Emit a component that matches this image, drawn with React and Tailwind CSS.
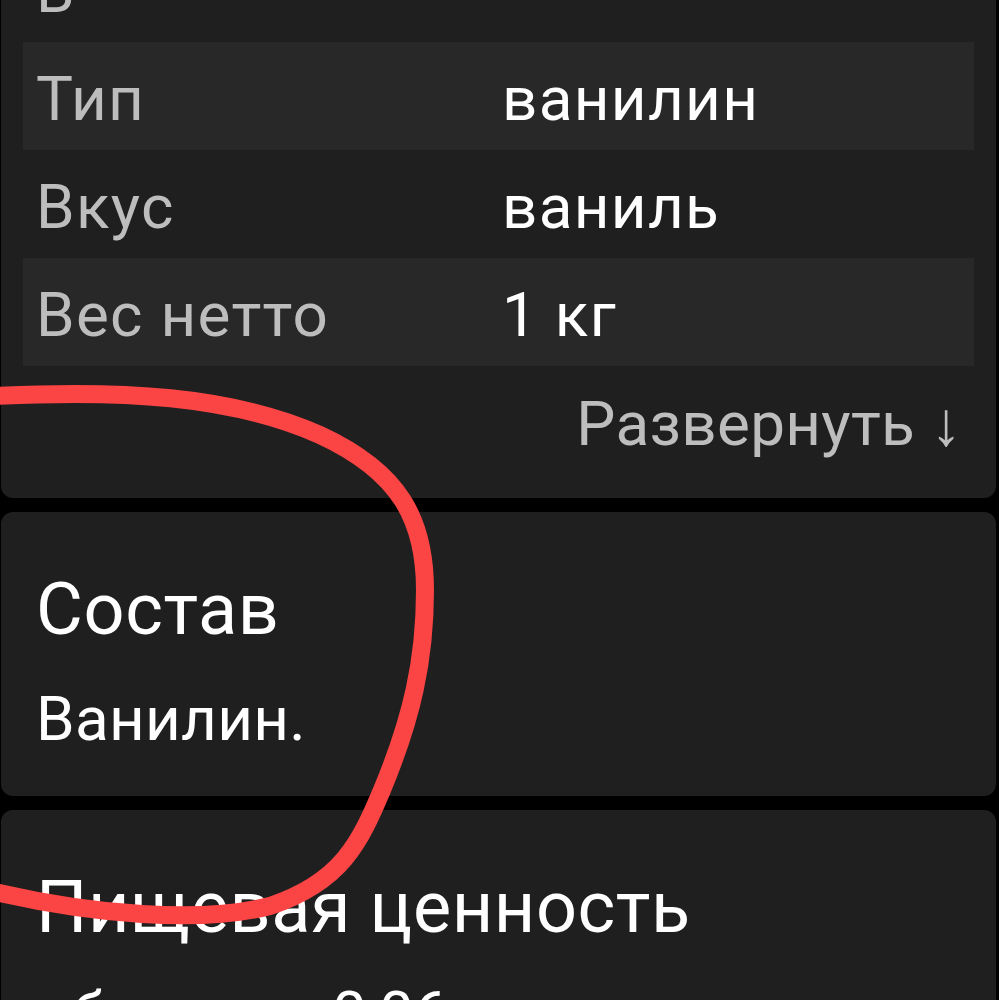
import React from "react";

const rows = [
  { label: "В", value: "", hl: false },
  { label: "Тип", value: "ванилин", hl: true },
  { label: "Вкус", value: "ваниль", hl: false },
  { label: "Вес нетто", value: "1 кг", hl: true },
];

export default function App() {
  return (
    <div className="relative h-[1000px] overflow-hidden bg-black font-['Roboto','Noto_Sans',sans-serif]">
      <div className="-mt-[86px] flex flex-col gap-[14px] pl-[1px] pr-[3px]">
        {/* Characteristics card */}
        <div className="rounded-[12px] bg-[#1f1f1f] px-[22px] pt-[20px] pb-[43px]">
          {rows.map((r, i) => (
            <div
              key={i}
              className={`grid h-[108px] grid-cols-[466px_1fr] items-center pl-[13px] pt-[6px] text-[62px] leading-none tracking-[1.3px] ${
                r.hl ? "bg-[#282828]" : ""
              }`}
            >
              <span className="text-[#bdbdbd]">{r.label}</span>
              <span className="text-white">{r.value}</span>
            </div>
          ))}
          <div className="flex justify-end pt-[27px] pr-[12px] text-[62px] leading-none tracking-[0.3px] text-[#bdbdbd]">
            <span>Развернуть ↓</span>
          </div>
        </div>

        {/* Composition card */}
        <div className="rounded-[12px] bg-[#1f1f1f] pl-[35px] pr-[22px] pt-[62px] pb-[46px]">
          <div className="text-[72px] leading-none tracking-[0.6px] text-white">Состав</div>
          <div className="mt-[42px] text-[62px] leading-none tracking-[0.3px] text-white">Ванилин.</div>
        </div>

        {/* Nutrition card */}
        <div className="rounded-[12px] bg-[#1f1f1f] pl-[35px] pr-[22px] pt-[62px] pb-[40px]">
          <div className="text-[72px] leading-none tracking-[0.6px] text-white">Пищевая ценность</div>
          <div className="mt-[39px] flex text-[62px] leading-none text-white">
            <span className="w-[296px]">обычно</span>
            <span>0,06</span>
          </div>
        </div>
      </div>

      {/* hand-drawn annotation */}
      <svg
        className="pointer-events-none absolute inset-0"
        width="999"
        height="1000"
        viewBox="0 0 999 1000"
      >
        <path
          d="M -5 396 C 120 390, 230 395, 320 435 C 400 472, 425 520, 425 590 C 425 660, 412 718, 382 790 C 360 842, 342 882, 270 906 C 200 924, 90 914, -5 892"
          fill="none"
          stroke="#fb4444"
          strokeWidth="18"
          strokeLinecap="round"
          strokeLinejoin="round"
        />
      </svg>
    </div>
  );
}
